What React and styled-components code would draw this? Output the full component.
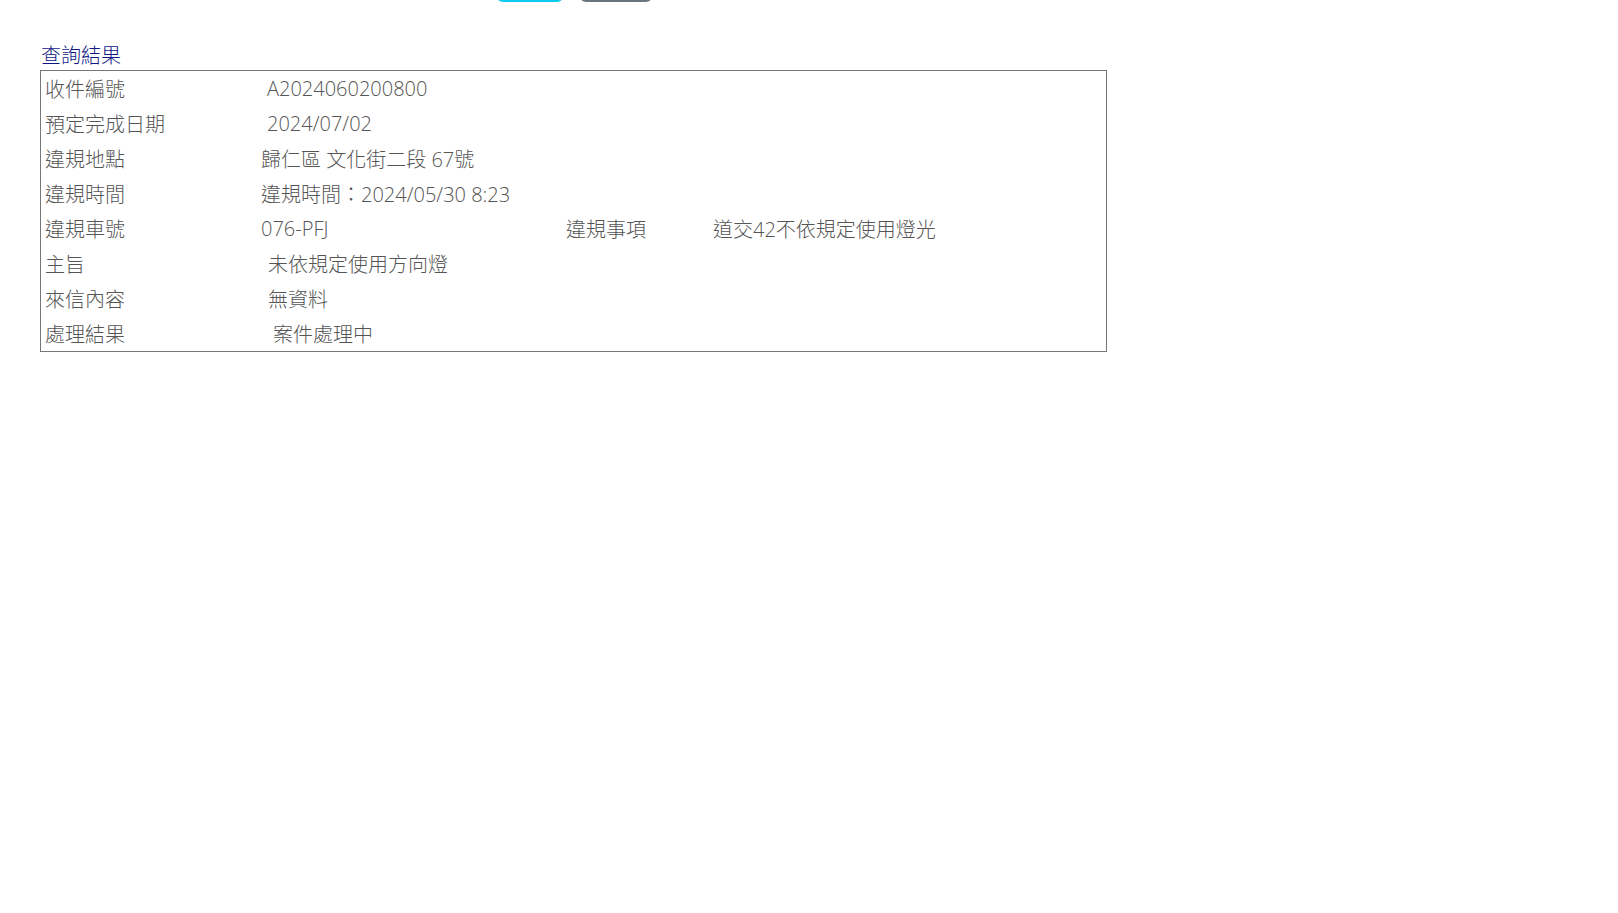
import React from "react";
import styled, { createGlobalStyle } from "styled-components";

const Global = createGlobalStyle`
  html, body { margin: 0; padding: 0; background: #fff; }
  body {
    font-family: "Open Sans", "Noto Sans CJK TC", "Noto Sans", sans-serif;
    color: #555;
    overflow: hidden;
  }
`;

const Page = styled.div`
  padding: 0 0 0 40px;
  width: 1067px;
`;

const ButtonRow = styled.div`
  display: flex;
  gap: 17px;
  margin: -36px 0 0 457px;
  height: 38px;
`;

const Button = styled.button`
  width: ${(p) => p.$w}px;
  height: 38px;
  border: none;
  border-radius: 6px;
  background: ${(p) => p.$bg};
`;

const Title = styled.div`
  margin: 39px 0 0 1px;
  height: 29px;
  line-height: 28px;
  font-size: 20px;
  font-weight: 300;
  color: #0f1785;
  font-family: "Noto Sans CJK TC", sans-serif;
`;

const Grid = styled.div`
  display: grid;
  grid-template-columns: 220px 305px 147px 1fr;
  grid-auto-rows: 35px;
  border: 1px solid #777;
  font-size: 20px;
  font-weight: 300;
`;

const Label = styled.div`
  display: flex;
  align-items: center;
  padding-left: 4px;
  white-space: nowrap;
  font-family: "Noto Sans CJK TC", sans-serif;
`;

const Value = styled.div`
  display: flex;
  align-items: center;
  padding-left: ${(p) => p.$indent || 0}px;
  white-space: nowrap;
  grid-column: ${(p) => (p.$span ? `span ${p.$span}` : "auto")};
`;

const rows = [
  { label: "收件編號", value: "A2024060200800", indent: 6 },
  { label: "預定完成日期", value: "2024/07/02", indent: 6 },
  { label: "違規地點", value: "歸仁區 文化街二段 67號", indent: 0 },
  { label: "違規時間", value: "違規時間：2024/05/30 8:23", indent: 0 },
  null,
  { label: "主旨", value: "未依規定使用方向燈", indent: 7 },
  { label: "來信內容", value: "無資料", indent: 7 },
  { label: "處理結果", value: "案件處理中", indent: 12 },
];

export default function App() {
  return (
    <>
      <Global />
      <Page>
        <ButtonRow>
          <Button $bg="#0dcaf0" $w={66} aria-label="查詢" />
          <Button $bg="#6c757d" $w={72} aria-label="清除" />
        </ButtonRow>
        <Title>查詢結果</Title>
        <Grid>
          {rows.map((r, i) =>
            r ? (
              <React.Fragment key={i}>
                <Label>{r.label}</Label>
                <Value $span={3} $indent={r.indent}>{r.value}</Value>
              </React.Fragment>
            ) : (
              <React.Fragment key={i}>
                <Label>違規車號</Label>
                <Value>076-PFJ</Value>
                <Value>違規事項</Value>
                <Value>道交42不依規定使用燈光</Value>
              </React.Fragment>
            )
          )}
        </Grid>
      </Page>
    </>
  );
}
